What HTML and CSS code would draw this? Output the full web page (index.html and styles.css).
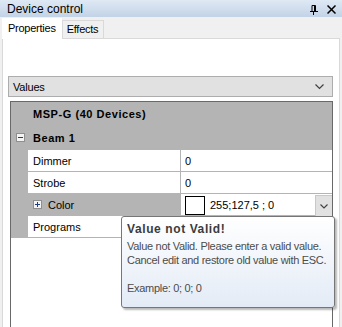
FILE: index.html
```html
<!DOCTYPE html>
<html>
<head>
<meta charset="utf-8">
<link rel="stylesheet" href="styles.css">
</head>
<body>
<div class="window">
  <div class="titlebar">
    <span class="title">Device control</span>
    <span class="title-icons">
      <svg class="pin" width="8" height="10" viewBox="0 0 8 10"><path d="M2 0.5H5.5V6M2 0.5V6M4.5 0.5V6" fill="none" stroke="#000" stroke-width="1"/><path d="M0 6.5H8" stroke="#000" stroke-width="1"/><path d="M3.5 6.5V10" stroke="#000" stroke-width="1"/></svg>
      <svg class="close" width="9" height="9" viewBox="0 0 9 9"><path d="M0.5 0.5L8.5 8.5M8.5 0.5L0.5 8.5" stroke="#000" stroke-width="1.5"/></svg>
    </span>
  </div>
  <div class="tabs">
    <div class="tab active">Properties</div>
    <div class="tab">Effects</div>
  </div>
  <div class="panel">
    <div class="combo">
      <span>Values</span>
      <svg width="9" height="6" viewBox="0 0 9 6"><path d="M0.5 0.5L4.5 4.5L8.5 0.5" fill="none" stroke="#404040" stroke-width="1.2"/></svg>
    </div>
    <div class="grid">
      <div class="cat head">MSP-G (40 Devices)</div>
      <div class="cat beam">
        <span class="exp minus"><svg width="9" height="9" viewBox="0 0 9 9"><rect x="0.5" y="0.5" width="8" height="8" fill="#f4f4f4" stroke="#8e8f8f"/><path d="M2 4.5H7" stroke="#1c3c8c" stroke-width="1"/></svg></span>
        <span>Beam 1</span>
      </div>
      <div class="row">
        <div class="margin"></div>
        <div class="name">Dimmer</div>
        <div class="value">0</div>
      </div>
      <div class="row">
        <div class="margin"></div>
        <div class="name">Strobe</div>
        <div class="value">0</div>
      </div>
      <div class="row selected">
        <div class="margin"></div>
        <div class="name">
          <span class="exp plus"><svg width="9" height="9" viewBox="0 0 9 9"><rect x="0.5" y="0.5" width="8" height="8" fill="#f4f4f4" stroke="#8e8f8f"/><path d="M2 4.5H7M4.5 2V7" stroke="#1c3c8c" stroke-width="1"/></svg></span>Color
        </div>
        <div class="value color-value">
          <span class="swatch"></span>
          <span class="cv-text">255;127,5 ; 0</span>
          <span class="drop"><svg width="8" height="5" viewBox="0 0 8 5"><path d="M0.5 0.5L4 4L7.5 0.5" fill="none" stroke="#404040" stroke-width="1.1"/></svg></span>
        </div>
      </div>
      <div class="row">
        <div class="margin"></div>
        <div class="name">Programs</div>
        <div class="value"></div>
      </div>
    </div>
  </div>
  <div class="tooltip">
    <div class="tt-title">Value not Valid!</div>
    <div class="tt-body">
      <div class="tt-line">Value not Valid. Please enter a valid value.</div>
      <div class="tt-line">Cancel edit and restore old value with ESC.</div>
      <div class="tt-line gap">Example: 0; 0; 0</div>
    </div>
  </div>
</div>
</body>
</html>
```

FILE: styles.css
```css
html, body {
  margin: 0;
  padding: 0;
}
body {
  width: 342px;
  height: 327px;
  overflow: hidden;
  background: #f0f0f0;
  font-family: "Liberation Sans", Arial, sans-serif;
  font-size: 11px;
  color: #000;
}
.window {
  position: relative;
  width: 342px;
  height: 327px;
  display: flex;
  flex-direction: column;
}
.titlebar {
  height: 17px;
  flex: none;
  background: linear-gradient(#dfe9f5, #c2d3e6);
  display: flex;
  align-items: center;
  justify-content: space-between;
  padding: 0 6px 0 7px;
}
.title {
  font-size: 12px;
  line-height: 17px;
  padding-top: 1px;
}
.title-icons {
  display: flex;
  align-items: center;
  gap: 9px;
  padding-top: 2px;
}
.tabs {
  height: 21px;
  flex: none;
  display: flex;
  align-items: flex-end;
  padding-left: 2px;
  position: relative;
  z-index: 1;
}
.tab {
  height: 17px;
  line-height: 17px;
  padding: 0 5px 0 4px;
  border: 1px solid #d9d9d9;
  border-bottom: none;
  background: #f0f0f0;
  font-size: 11px;
  letter-spacing: -0.25px;
}
.tab.active {
  height: 20px;
  line-height: 19px;
  background: #fff;
  padding: 0 5px 0 5px;
  border-color: #fff;
  margin-bottom: -1px;
}
.panel {
  flex: 1;
  margin-left: 2px;
  margin-right: 2px;
  background: #fff;
  border: 1px solid #d9d9d9;
  border-bottom: none;
  padding: 37px 6px 0 5px;
  display: flex;
  flex-direction: column;
}
.combo {
  height: 19px;
  flex: none;
  background: #e1e1e1;
  border: 1px solid #adadad;
  display: flex;
  align-items: center;
  justify-content: space-between;
  padding: 0 8px 0 4px;
  letter-spacing: -0.2px;
}
.combo svg {
  margin-top: 1px;
}
.grid {
  flex: 1;
  margin-top: 4px;
  margin-left: 2px;
  background: #fff;
  border: 1px solid #696969;
  border-bottom: none;
  display: flex;
  flex-direction: column;
}
.cat {
  background: #b4b4b4;
  font-weight: bold;
  display: flex;
  align-items: center;
  padding-left: 22px;
  letter-spacing: 0.55px;
}
.head {
  height: 23px;
}
.beam {
  height: 24px;
  position: relative;
  padding-top: 1px;
}
.exp {
  display: inline-flex;
}
.minus {
  position: absolute;
  left: 5px;
  top: 8px;
}
.row {
  height: 21px;
  display: flex;
  border-bottom: 1px solid #b4b4b4;
}
.margin {
  width: 17px;
  background: #b4b4b4;
  flex: none;
}
.name {
  width: 147px;
  flex: none;
  padding-left: 5px;
  display: flex;
  align-items: center;
  border-right: 1px solid #b4b4b4;
  background: #fff;
}
.row.selected .name {
  background: #b4b4b4;
}
.plus {
  margin-right: 6px;
  margin-top: -1px;
}
.value {
  flex: 1;
  padding-left: 4px;
  display: flex;
  align-items: center;
}
.color-value {
  gap: 5px;
}
.swatch {
  width: 18px;
  height: 17px;
  border: 1px solid #000;
  background: #fff;
  margin-top: 1px;
}
.cv-text {
  flex: 1;
}
.drop {
  width: 16px;
  height: 20px;
  background: #e1e1e1;
  border: 1px solid #c8c8c8;
  border-right: none;
  display: flex;
  align-items: center;
  justify-content: center;
  align-self: flex-start;
  margin-top: 1px;
}
.tooltip {
  position: absolute;
  left: 121px;
  top: 216px;
  width: 203px;
  height: 85px;
  padding: 5px 4px 0 5px;
  border: 1px solid #767676;
  border-radius: 3px;
  background: linear-gradient(#ffffff, #e3ebf6);
  box-shadow: 2px 2px 2px rgba(0, 0, 0, 0.28);
  color: #4c4c4c;
}
.tt-title {
  font-weight: bold;
  font-size: 12px;
  line-height: 14px;
  color: #3b3b3b;
  letter-spacing: 0.6px;
}
.tt-body {
  margin-top: 3px;
  font-size: 11px;
  letter-spacing: -0.3px;
  white-space: nowrap;
}
.tt-line {
  line-height: 14px;
}
.tt-line.gap {
  margin-top: 14px;
}
```
